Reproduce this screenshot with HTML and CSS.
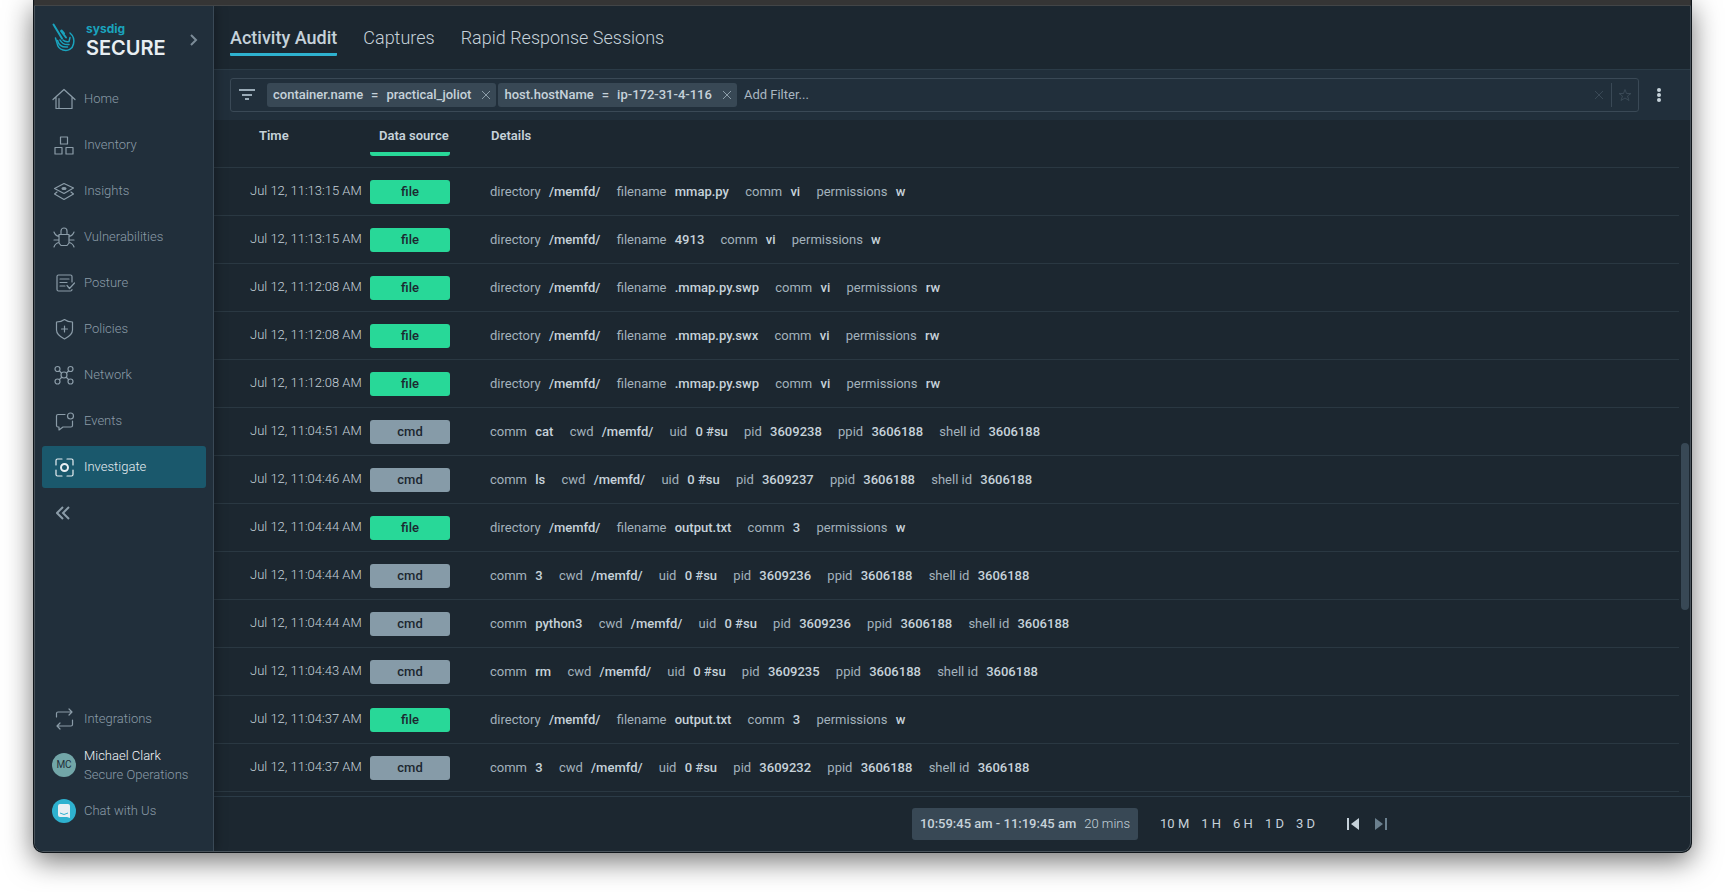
FILE: index.html
```
<!DOCTYPE html>
<html lang="en">
<head>
   <meta charset="utf-8">
   <meta name="viewport" content="width=device-width, initial-scale=1">
   <title>Activity Audit - Sysdig Secure</title>
   <link rel="stylesheet" href="styles.css">
</head>
<body>
<div class="window">
   <div class="titlebar"></div>
   <div class="app">

      <!-- Left navigation -->
      <aside class="sidebar">
         <div class="brand">
            <svg class="logo" width="24" height="30" viewBox="0 0 24 30" fill="none" stroke="#1aa3bd" stroke-width="2" stroke-linecap="round">
               <path d="M1.500 1.500L10 15.500"/>
               <path d="M9 8l5 6.500M9.500 7.500l2.500 3"/>
               <path d="M18 10c3 2.500 4.500 6.500 3.500 11-1 5-5.500 7.500-10.500 6-3.500-1-5.500-3.500-6-7L3.500 15" stroke-width="1.500"/>
               <path d="M5.500 17.500c1 4 4.500 7 10 6.500M8 17c1.500 3 4.500 5 9 4.500M11 17c1.500 1.500 3.500 2 6 1.500l1-4" stroke-width="1.500"/>
            </svg>
            <div class="brandText">
               <span class="brandTop">sysdig</span>
               <span class="brandName">SECURE</span>
            </div>
            <button class="iconBtn expand" type="button" aria-label="Switch product">
               <svg width="8" height="12" viewBox="0 0 8 12" fill="none" stroke="currentColor" stroke-width="2"><path d="M1 1l5 5-5 5"/></svg>
            </button>
         </div>

         <nav class="menu">
            <a href="#"><svg class="icon" viewBox="0 0 24 24"><path d="M1 12.500L12 2.500l11 10M4 10v11.500h16V10M7 11.500V21"/></svg>Home</a>
            <a href="#"><svg class="icon" viewBox="0 0 24 24"><path d="M8.500 4h7v7h-7zM3 14.500h7v6.500H3zM14 14.500h7v6.500h-7z"/></svg>Inventory</a>
            <a href="#"><svg class="icon" viewBox="0 0 24 24"><path d="M12 4.500l9.500 4.500-9.500 5.500L2.500 9.500zM5 13l-2.500 2 9.500 5.500 9.500-5.500L19 13"/><ellipse cx="12" cy="9.500" rx="2" ry="1" fill="currentColor"/></svg>Insights</a>
            <a href="#"><svg class="icon" viewBox="0 0 24 24"><path d="M7 9.500h10V18l-2 2.500H9L7 18zM9 9.500V6a3 3 0 0 1 6 0v3.500M2 7c1 3 2.500 4 5 4.500M22 7c-1 3-2.500 4-5 4.500M2 15h5M22 15h-5M2 22c1-3 2.500-4 5-4.500M22 22c-1-3-2.500-4-5-4.500"/></svg>Vulnerabilities</a>
            <a href="#"><svg class="icon" viewBox="0 0 24 24"><path d="M20 11V5.500Q20 4 18.500 4h-12Q5 4 5 5.500v13Q5 20 6.500 20h12q1.500 0 1.500-1.500M8 8h9M8 11.500h7M8 15h5M15 14.500l2.500 3 5-5.500"/></svg>Posture</a>
            <a href="#"><svg class="icon" viewBox="0 0 24 24"><path d="M12.500 2.500c2.500 2 5 2.500 8 2.500v8c0 4-4 7-8 9-4-2-8-5-8-9V5c3 0 5.500-.5 8-2.500zM12.500 9v6M9.500 12h6"/></svg>Policies</a>
            <a href="#"><svg class="icon" viewBox="0 0 24 24"><circle cx="12" cy="12" r="3"/><circle cx="5.500" cy="6" r="2.500"/><circle cx="18.500" cy="6" r="2.500"/><circle cx="5.500" cy="18.500" r="2.500"/><circle cx="18.500" cy="18.500" r="2.500"/><path d="M7.500 8l2 2M16.500 8l-2 2M7.500 16.500l2-2M16.500 16.500l-2-2"/></svg>Network</a>
            <a href="#"><svg class="icon" viewBox="0 0 24 24"><path d="M13 5.500H6Q4.500 5.500 4.500 7v9.500Q4.500 18 6 18h1v3l4-3h8q1.500 0 1.500-1.500V12"/><circle cx="18.500" cy="7" r="3"/></svg>Events</a>
            <a class="active" href="#"><svg class="icon" viewBox="0 0 24 24"><path d="M10 4H5.500Q4 4 4 5.500V10M15 4h4.500Q21 4 21 5.500V10M10 21H5.500Q4 21 4 19.500V15M15 21h4.500q1.500 0 1.500-1.500V15"/><circle cx="12.500" cy="12.500" r="3.500" stroke-width="2"/></svg>Investigate</a>
         </nav>
         <button class="iconBtn collapse" type="button" aria-label="Collapse menu">
            <svg width="14" height="14" viewBox="0 0 14 14" fill="none" stroke="currentColor" stroke-width="2"><path d="M7 1L1 7l6 6M13 1L7 7l6 6"/></svg>
         </button>

         <div class="menuBottom">
            <a href="#"><svg class="icon" viewBox="0 0 24 24"><path d="M4.500 10V6.500Q4.500 5 6 5h14M17 2l3 3-3 3M20.500 13v4.500q0 1.500-1.500 1.500H5M8 16l-3 3 3 3"/></svg>Integrations</a>
            <a class="user" href="#">
               <span class="avatar">MC</span>
               <span class="userText"><span class="userName">Michael Clark</span><span>Secure Operations</span></span>
            </a>
            <a href="#">
               <svg class="chatIcon" width="24" height="24" viewBox="0 0 24 24"><circle cx="12" cy="12" r="12" fill="#2eb1cf"/><path d="M8 5h8q2 0 2 2v12l-3-1H8q-2 0-2-2V7q0-2 2-2z" fill="#e8eef2"/><path d="M8 14q4 3 8 0" fill="none" stroke="#2eb1cf"/></svg>Chat with Us
            </a>
         </div>
      </aside>

      <main class="main">
         <nav class="tabs">
            <a class="active" href="#">Activity Audit</a>
            <a href="#">Captures</a>
            <a href="#">Rapid Response Sessions</a>
         </nav>

         <!-- Filter bar -->
         <div class="filterBar">
            <div class="filterBox">
               <svg class="filterIcon" width="16" height="12" viewBox="0 0 16 12" stroke="currentColor" stroke-width="2"><path d="M0 1h16M3 6h10M6 10h4"/></svg>
               <span class="chip">container.name<span class="op">=</span>practical_joliot<button type="button" aria-label="Remove filter"><svg width="8" height="8" viewBox="0 0 8 8" stroke="currentColor"><path d="M0 0l8 8M8 0L0 8"/></svg></button></span>
               <span class="chip">host.hostName<span class="op">=</span>ip-172-31-4-116<button type="button" aria-label="Remove filter"><svg width="8" height="8" viewBox="0 0 8 8" stroke="currentColor"><path d="M0 0l8 8M8 0L0 8"/></svg></button></span>
               <input class="addFilter" type="text" placeholder="Add Filter..." aria-label="Add Filter">
               <button class="iconBtn dim" type="button" aria-label="Clear filters"><svg width="8" height="8" viewBox="0 0 8 8" stroke="currentColor"><path d="M0 0l8 8M8 0L0 8"/></svg></button>
               <span class="divider"></span>
               <button class="iconBtn dim" type="button" aria-label="Save as favorite"><svg width="14" height="14" viewBox="0 0 14 14" fill="none" stroke="currentColor"><path d="M7 1.500l1.500 4H13L9.500 8l1.500 4.500L7 10l-4 2.500L4.500 8 1 5.500h4.500z"/></svg></button>
            </div>
            <button class="iconBtn kebab" type="button" aria-label="More"><svg width="4" height="14" viewBox="0 0 4 14" fill="currentColor"><circle cx="2" cy="2" r="2"/><circle cx="2" cy="7" r="2"/><circle cx="2" cy="12" r="2"/></svg></button>
         </div>

         <!-- Activity list -->
         <div class="list">
            <table class="activity">
               <thead>
                  <tr><th class="time">Time</th><th class="source">Data source</th><th>Details</th></tr>
               </thead>
               <tbody>
                  <tr class="partial"><td></td><td><div class="badgeEnd"></div></td><td></td></tr>
                  <tr><td class="time">Jul 12, 11:13:15 AM</td><td><span class="badge file">file</span></td><td class="details"><span>directory</span> <b>/memfd/</b> <span>filename</span> <b>mmap.py</b> <span>comm</span> <b>vi</b> <span>permissions</span> <b>w</b></td></tr>
                  <tr><td class="time">Jul 12, 11:13:15 AM</td><td><span class="badge file">file</span></td><td class="details"><span>directory</span> <b>/memfd/</b> <span>filename</span> <b>4913</b> <span>comm</span> <b>vi</b> <span>permissions</span> <b>w</b></td></tr>
                  <tr><td class="time">Jul 12, 11:12:08 AM</td><td><span class="badge file">file</span></td><td class="details"><span>directory</span> <b>/memfd/</b> <span>filename</span> <b>.mmap.py.swp</b> <span>comm</span> <b>vi</b> <span>permissions</span> <b>rw</b></td></tr>
                  <tr><td class="time">Jul 12, 11:12:08 AM</td><td><span class="badge file">file</span></td><td class="details"><span>directory</span> <b>/memfd/</b> <span>filename</span> <b>.mmap.py.swx</b> <span>comm</span> <b>vi</b> <span>permissions</span> <b>rw</b></td></tr>
                  <tr><td class="time">Jul 12, 11:12:08 AM</td><td><span class="badge file">file</span></td><td class="details"><span>directory</span> <b>/memfd/</b> <span>filename</span> <b>.mmap.py.swp</b> <span>comm</span> <b>vi</b> <span>permissions</span> <b>rw</b></td></tr>
                  <tr><td class="time">Jul 12, 11:04:51 AM</td><td><span class="badge cmd">cmd</span></td><td class="details"><span>comm</span> <b>cat</b> <span>cwd</span> <b>/memfd/</b> <span>uid</span> <b>0 #su</b> <span>pid</span> <b>3609238</b> <span>ppid</span> <b>3606188</b> <span>shell id</span> <b>3606188</b></td></tr>
                  <tr><td class="time">Jul 12, 11:04:46 AM</td><td><span class="badge cmd">cmd</span></td><td class="details"><span>comm</span> <b>ls</b> <span>cwd</span> <b>/memfd/</b> <span>uid</span> <b>0 #su</b> <span>pid</span> <b>3609237</b> <span>ppid</span> <b>3606188</b> <span>shell id</span> <b>3606188</b></td></tr>
                  <tr><td class="time">Jul 12, 11:04:44 AM</td><td><span class="badge file">file</span></td><td class="details"><span>directory</span> <b>/memfd/</b> <span>filename</span> <b>output.txt</b> <span>comm</span> <b>3</b> <span>permissions</span> <b>w</b></td></tr>
                  <tr><td class="time">Jul 12, 11:04:44 AM</td><td><span class="badge cmd">cmd</span></td><td class="details"><span>comm</span> <b>3</b> <span>cwd</span> <b>/memfd/</b> <span>uid</span> <b>0 #su</b> <span>pid</span> <b>3609236</b> <span>ppid</span> <b>3606188</b> <span>shell id</span> <b>3606188</b></td></tr>
                  <tr><td class="time">Jul 12, 11:04:44 AM</td><td><span class="badge cmd">cmd</span></td><td class="details"><span>comm</span> <b>python3</b> <span>cwd</span> <b>/memfd/</b> <span>uid</span> <b>0 #su</b> <span>pid</span> <b>3609236</b> <span>ppid</span> <b>3606188</b> <span>shell id</span> <b>3606188</b></td></tr>
                  <tr><td class="time">Jul 12, 11:04:43 AM</td><td><span class="badge cmd">cmd</span></td><td class="details"><span>comm</span> <b>rm</b> <span>cwd</span> <b>/memfd/</b> <span>uid</span> <b>0 #su</b> <span>pid</span> <b>3609235</b> <span>ppid</span> <b>3606188</b> <span>shell id</span> <b>3606188</b></td></tr>
                  <tr><td class="time">Jul 12, 11:04:37 AM</td><td><span class="badge file">file</span></td><td class="details"><span>directory</span> <b>/memfd/</b> <span>filename</span> <b>output.txt</b> <span>comm</span> <b>3</b> <span>permissions</span> <b>w</b></td></tr>
                  <tr><td class="time">Jul 12, 11:04:37 AM</td><td><span class="badge cmd">cmd</span></td><td class="details"><span>comm</span> <b>3</b> <span>cwd</span> <b>/memfd/</b> <span>uid</span> <b>0 #su</b> <span>pid</span> <b>3609232</b> <span>ppid</span> <b>3606188</b> <span>shell id</span> <b>3606188</b></td></tr>
               </tbody>
            </table>
            <div class="scrollThumb"></div>
         </div>

         <!-- Time navigation -->
         <footer class="timeNav">
            <button class="range" type="button"><b>10:59:45 am - 11:19:45 am</b><span>20 mins</span></button>
            <div class="presets">
               <button type="button">10 M</button>
               <button type="button">1 H</button>
               <button type="button">6 H</button>
               <button type="button">1 D</button>
               <button type="button">3 D</button>
            </div>
            <div class="steps">
               <button class="iconBtn" type="button" aria-label="Previous"><svg width="12" height="12" viewBox="0 0 12 12" fill="currentColor"><path d="M0 0h2v12H0zM12 0v12L4 6z"/></svg></button>
               <button class="iconBtn off" type="button" aria-label="Next"><svg width="12" height="12" viewBox="0 0 12 12" fill="currentColor"><path d="M10 0h2v12h-2zM0 0v12l8-6z"/></svg></button>
            </div>
         </footer>
      </main>
   </div>
</div>
</body>
</html>
```
FILE: styles.css
```
* {
   box-sizing: border-box;
}
body {
   background-color: #fff;
   color: #c6d2da;
   font-family: Roboto, "Liberation Sans", sans-serif;
   font-size: 13px;
   line-height: 18px;
   margin: 0;
   min-height: 100vh;
   padding: 0 33px 39px;
}
a {
   color: inherit;
   text-decoration: none;
}
button, input {
   background: none;
   border: 0;
   color: inherit;
   font: inherit;
   margin: 0;
   padding: 0;
}
svg {
   display: block;
   flex: none;
}

/* Window frame */
.window {
   background-color: #1c2730;
   border: 1px solid #10161b;
   border-top: 0;
   border-radius: 0 0 10px 10px;
   box-shadow: 0 8px 28px rgba(0,0,0,.55);
   display: flex;
   flex-direction: column;
   height: calc(100vh - 39px);
   overflow: hidden;
}
.titlebar {
   background-color: #353535;
   border-bottom: 1px solid #424547;
   flex: none;
   height: 6px;
}
.app {
   border: 1px solid #4a545c;
   border-top: 0;
   border-radius: 0 0 9px 9px;
   display: flex;
   flex: 1;
   min-height: 0;
   overflow: hidden;
}
.iconBtn {
   align-items: center;
   display: flex;
   justify-content: center;
}

/* Left navigation */
.sidebar {
   background-color: #212f3b;
   border-right: 1px solid #3a4956;
   box-shadow: 0 0 12px rgba(0,0,0,.4);
   color: #8b9ca8;
   display: flex;
   flex: none;
   flex-direction: column;
   font-weight: 300;
   width: 179px;
   z-index: 1;
}
.brand {
   align-items: center;
   display: flex;
   height: 72px;
   padding: 0 15px 4px 17px;
}
.logo {
   margin-bottom: 4px;
}
.brandText {
   display: flex;
   flex-direction: column;
   font-family: Inter, sans-serif;
   margin: 0 auto 0 10px;
}
.brandTop {
   color: #1aa3bd;
   font-size: 12px;
   font-weight: 700;
   line-height: 16px;
}
.brandName {
   color: #e8eef2;
   font-size: 20px;
   font-weight: 600;
   line-height: 22px;
}
.expand {
   color: #7c8c98;
}
.menu {
   display: flex;
   flex-direction: column;
   gap: 4px;
   padding: 0 7px;
}
.menu a, .menuBottom a {
   align-items: center;
   border-radius: 3px;
   display: flex;
   gap: 8px;
   height: 42px;
   padding: 0 10px;
}
.menu a.active {
   background-color: #1a586c;
   color: #e8eef2;
}
.icon {
   fill: none;
   height: 24px;
   stroke: currentColor;
   stroke-linecap: round;
   stroke-linejoin: round;
   stroke-width: 1.2;
   width: 24px;
}
.collapse {
   height: 42px;
   justify-content: flex-start;
   margin: 4px 0 0 21px;
}
.menuBottom {
   display: flex;
   flex-direction: column;
   gap: 4px;
   margin-top: auto;
   padding: 0 7px 19px;
}
.menuBottom .avatar {
   background-color: #72a6a8;
   border-radius: 12px;
   color: #212f3b;
   font-size: 10px;
   font-weight: 400;
   height: 24px;
   line-height: 24px;
   text-align: center;
   width: 24px;
}
.userText {
   display: flex;
   flex-direction: column;
   line-height: 19px;
}
.userName {
   color: #f2f5f7;
}
.chatIcon {
   height: 24px;
   width: 24px;
}

/* Page tabs */
.main {
   display: flex;
   flex: 1;
   flex-direction: column;
   min-width: 0;
}
.tabs {
   border-bottom: 1px solid #2b3b47;
   display: flex;
   flex: none;
   font-size: 18px;
   font-weight: 300;
   gap: 26px;
   height: 64px;
   line-height: 24px;
   padding: 20px 16px 0;
}
.tabs a {
   border-radius: 1px;
   height: 30px;
}
.tabs a.active {
   border-bottom: 3px solid #2eb1cf;
   font-weight: 500;
}

/* Filter bar */
.filterBar {
   align-items: center;
   background-color: #212f3b;
   display: flex;
   flex: none;
   height: 50px;
   padding: 0 29px 0 16px;
}
.filterBox {
   align-items: center;
   border: 1px solid #3a4956;
   border-radius: 3px;
   display: flex;
   flex: 1;
   gap: 2px;
   height: 34px;
   padding: 0 6px 0 8px;
}
.filterIcon {
   color: #9aabb7;
   margin-right: 10px;
}
.chip {
   align-items: center;
   background-color: #384855;
   border-radius: 3px;
   display: flex;
   font-weight: 500;
   height: 24px;
   padding: 0 6px;
   white-space: nowrap;
}
.chip .op {
   margin: 0 8px;
}
.chip button {
   color: #8b9ca8;
   margin-left: 11px;
}
.addFilter {
   color: #c6d2da;
   flex: 1;
   margin-left: 5px;
   min-width: 0;
}
.addFilter::placeholder {
   color: #a9b7c1;
   opacity: 1;
}
.dim {
   color: #3a4956;
}
.divider {
   background-color: #3a4956;
   height: 24px;
   margin: 0 4px 0 6px;
   width: 1px;
}
.kebab {
   margin-left: 18px;
}

/* Activity list */
.list {
   flex: 1;
   min-height: 0;
   overflow: hidden;
   padding-right: 11px;
   position: relative;
}
.activity {
   border-collapse: separate;
   border-spacing: 0;
   table-layout: fixed;
   width: 100%;
}
.activity th {
   font-weight: 600;
   height: 32px;
   padding: 0 0 0 1px;
   text-align: left;
}
.activity th.time {
   padding-left: 45px;
   width: 156px;
}
.activity th.source {
   padding-left: 9px;
   width: 120px;
}
.activity td {
   border-bottom: 1px solid #2a3842;
   height: 48px;
   padding: 0;
   white-space: nowrap;
}
.activity td.time {
   font-weight: 300;
   padding: 0 0 2px 36px;
}
.activity .partial td {
   height: 16px;
   vertical-align: top;
}
.badge, .badgeEnd {
   border-radius: 3px;
   color: #1c2730;
   display: block;
   font-weight: 500;
   height: 24px;
   line-height: 24px;
   text-align: center;
   width: 80px;
}
.badgeEnd {
   background-color: #28d898;
   border-radius: 0 0 3px 3px;
   height: 4px;
}
.file {
   background-color: #28d898;
}
.cmd {
   background-color: #869ba8;
}
.details span {
   color: #a3b2bc;
   margin-right: 5px;
}
.details b {
   font-weight: 500;
   margin-right: 13px;
}
.scrollThumb {
   background-color: #384855;
   border-radius: 4px;
   height: 167px;
   position: absolute;
   right: 1px;
   top: 323px;
   width: 8px;
}

/* Time navigation */
.timeNav {
   align-items: center;
   border-top: 1px solid #2b3b47;
   display: flex;
   flex: none;
   height: 55px;
   justify-content: flex-end;
   padding-right: 303px;
}
.range {
   background-color: #384855;
   border-radius: 3px;
   display: flex;
   gap: 8px;
   height: 32px;
   line-height: 32px;
   padding: 0 8px;
}
.range b {
   font-weight: 500;
}
.range span {
   font-weight: 300;
}
.presets {
   display: flex;
   gap: 12px;
   margin: 0 32px 0 22px;
}
.steps {
   display: flex;
   gap: 16px;
}
.off {
   color: #6b808e;
}
```
